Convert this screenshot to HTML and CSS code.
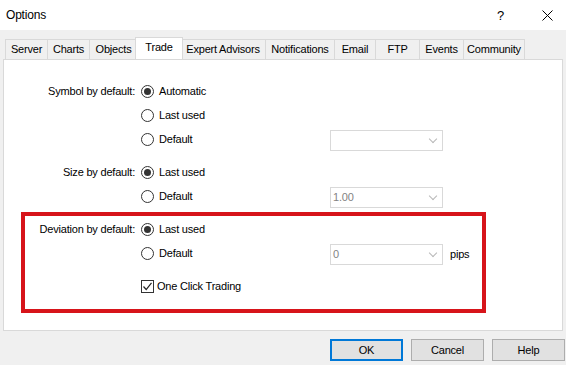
FILE: index.html
```html
<!DOCTYPE html>
<html>
<head>
<meta charset="utf-8">
<title>Options</title>
<link rel="stylesheet" href="styles.css">
</head>
<body>
<div class="dialog">
  <div class="titlebar">
    <span class="title">Options</span>
    <span class="help">?</span>
    <span class="close">
      <svg width="11" height="11" viewBox="0 0 11 11"><path d="M0.5 0.5 L10.5 10.5 M10.5 0.5 L0.5 10.5" stroke="#000" stroke-width="1" fill="none"/></svg>
    </span>
  </div>

  <ul class="tabs">
    <li class="t-server">Server</li>
    <li class="t-charts">Charts</li>
    <li class="t-objects">Objects</li>
    <li class="t-trade active">Trade</li>
    <li class="t-experts">Expert Advisors</li>
    <li class="t-notify">Notifications</li>
    <li class="t-email">Email</li>
    <li class="t-ftp">FTP</li>
    <li class="t-events">Events</li>
    <li class="t-community">Community</li>
  </ul>

  <div class="panel">
    <div class="group">
      <div class="key">Symbol by default:</div>
      <label class="opt"><span class="radio checked"></span>Automatic</label>
      <div></div><div></div>
      <div></div>
      <label class="opt"><span class="radio"></span>Last used</label>
      <div></div><div></div>
      <div></div>
      <label class="opt"><span class="radio"></span>Default</label>
      <div class="combo"><span></span><i class="chev"></i></div>
      <div></div>
    </div>

    <div class="group">
      <div class="key">Size by default:</div>
      <label class="opt"><span class="radio checked"></span>Last used</label>
      <div></div><div></div>
      <div></div>
      <label class="opt"><span class="radio"></span>Default</label>
      <div class="combo"><span>1.00</span><i class="chev"></i></div>
      <div></div>
    </div>

    <div class="group marked">
      <div class="key">Deviation by default:</div>
      <label class="opt"><span class="radio checked"></span>Last used</label>
      <div></div><div></div>
      <div></div>
      <label class="opt"><span class="radio"></span>Default</label>
      <div class="combo"><span>0</span><i class="chev"></i></div>
      <div class="unit">pips</div>
      <div class="spacer"></div>
      <div></div>
      <label class="opt check-row"><span class="check"><svg width="11" height="11" viewBox="0 0 11 11"><path d="M1.5 5.5 L4.2 8.5 L9.5 1.8" stroke="#222" stroke-width="1.2" fill="none"/></svg></span>One Click Trading</label>
      <div></div><div></div>
    </div>
  </div>

  <div class="buttons">
    <button class="default">OK</button>
    <button>Cancel</button>
    <button>Help</button>
  </div>
</div>
</body>
</html>
```

FILE: styles.css
```css
body { margin: 0; background: #f0f0f0; font: 11px/1 "Liberation Sans", Arial, sans-serif; letter-spacing: -0.2px; color: #000; }
.dialog { width: 566px; height: 365px; overflow: hidden; }

.titlebar { display: flex; align-items: center; height: 30px; background: #fff; }
.title { margin-left: 6px; font-size: 12px; flex: 1; }
.help { width: 12px; margin-right: 33px; font-size: 13px; }
.close { display: flex; margin-right: 13px; }

.tabs { display: flex; align-items: flex-end; height: 22px; margin: 7px 0 0; padding: 0 0 0 5px; list-style: none; }
.tabs li { box-sizing: border-box; height: 20px; padding-top: 4px; border: 1px solid #d9d9d9; border-bottom: 0; border-right: 0; background: #f0f0f0; text-align: center; }
.tabs li:last-child { border-right: 1px solid #d9d9d9; }
.tabs li.active { height: 22px; padding-top: 4px; margin: 0 -2px 0 -2px; position: relative; z-index: 1; border-right: 1px solid #d9d9d9; background: #fff; }
.tabs li.active + li { border-left: 0; }
.t-server { width: 42px; }
.t-charts { width: 42px; }
.t-objects { width: 48px; }
.t-trade { width: 48px; }
.t-experts { width: 84px; }
.t-notify { width: 69px; }
.t-email { width: 41px; }
.t-ftp { width: 44px; }
.t-events { width: 44px; }
.t-community { width: 62px; }

.panel { box-sizing: border-box; height: 272px; margin: 0 3px 0 3px; padding: 19px 0 0; border: 1px solid #d9d9d9; background: #fff; }

.group { display: grid; grid-template-columns: 131px 195px 113px auto; grid-auto-rows: 24px; align-items: center; margin-bottom: 9px; }
.group.marked { position: relative; grid-template-rows: 24px 24px 9px 24px; }
.group.marked::before { content: ""; position: absolute; left: 17px; top: -5px; width: 457px; height: 93px; border: 4px solid #d7141a; }
.key { text-align: right; }
.opt { display: flex; align-items: center; padding-left: 6px; }
.radio { box-sizing: border-box; width: 13px; height: 13px; margin-right: 5px; border: 1px solid #333; border-radius: 50%; display: flex; align-items: center; justify-content: center; }
.radio.checked::after { content: ""; width: 7px; height: 7px; border-radius: 50%; background: #333; }
.check { box-sizing: border-box; width: 13px; height: 13px; margin-right: 3px; border: 1px solid #333; display: flex; align-items: center; justify-content: center; }
.spacer { grid-column: 1 / -1; height: 9px; }

.combo { box-sizing: border-box; display: flex; align-items: center; justify-content: space-between; height: 21px; margin-top: 3px; padding: 0 6px 0 2px; border: 1px solid #d9d9d9; color: #838383; }
.chev { width: 5px; height: 5px; margin-top: -3px; border-right: 1px solid #b8b8b8; border-bottom: 1px solid #b8b8b8; transform: rotate(45deg); }
.unit { padding-left: 7px; margin-top: 3px; }

.buttons { display: flex; justify-content: flex-end; gap: 8px; margin: 8px 1px 0 0; }
.buttons button { box-sizing: border-box; width: 73px; height: 22px; border: 1px solid #adadad; background: #e1e1e1; font: 11px "Liberation Sans", Arial, sans-serif; letter-spacing: -0.2px; color: #000; }
.buttons button.default { border: 2px solid #0078d7; }
```
